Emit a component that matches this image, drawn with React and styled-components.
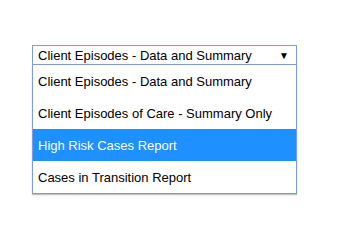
import React, { useState } from 'react';
import styled, { createGlobalStyle } from 'styled-components';

const GlobalStyle = createGlobalStyle`
  body {
    margin: 0;
    background: #fff;
    font-family: "Liberation Sans", Arial, sans-serif;
  }
`;

const options = [
  'Client Episodes - Data and Summary',
  'Client Episodes of Care - Summary Only',
  'High Risk Cases Report',
  'Cases in Transition Report',
];

const App = () => {
  const [selected] = useState(0);
  const [hovered, setHovered] = useState(2);

  return (
    <Page>
      <GlobalStyle />
      <Dropdown>
        <SelectBox>
          <SelectText>{options[selected]}</SelectText>
          <Arrow>▼</Arrow>
        </SelectBox>
        <OptionList>
          {options.map((opt, i) => (
            <Option key={opt} active={i === hovered} onMouseEnter={() => setHovered(i)}>
              {opt}
            </Option>
          ))}
        </OptionList>
      </Dropdown>
    </Page>
  );
};
export default App;

const Page = styled.div`
  padding: 45px 0 0 32px;
  height: 248px;
  box-sizing: border-box;
`;

const Dropdown = styled.div`
  width: 265px;
  display: flex;
  flex-direction: column;
  font-size: 13px;
  color: #000;
`;

const SelectBox = styled.div`
  height: 20px;
  box-sizing: border-box;
  border: 1px solid #7f9ddb;
  display: flex;
  align-items: center;
  justify-content: space-between;
  padding: 0 7px 0 5px;
`;

const SelectText = styled.span`
  white-space: nowrap;
`;

const Arrow = styled.span`
  font-size: 10px;
`;

const OptionList = styled.ul`
  list-style: none;
  margin: 0;
  padding: 0;
  border: 1px solid #7f9ddb;
  border-top: none;
  box-shadow: 0 1px 1px rgba(0, 0, 0, 0.25);
`;

const Option = styled.li`
  height: 31px;
  line-height: 31px;
  padding: 1px 0 0 5px;
  white-space: nowrap;
  background: ${(props) => (props.active ? '#1e90ff' : '#fff')};
  color: ${(props) => (props.active ? '#fff' : '#000')};
`;
